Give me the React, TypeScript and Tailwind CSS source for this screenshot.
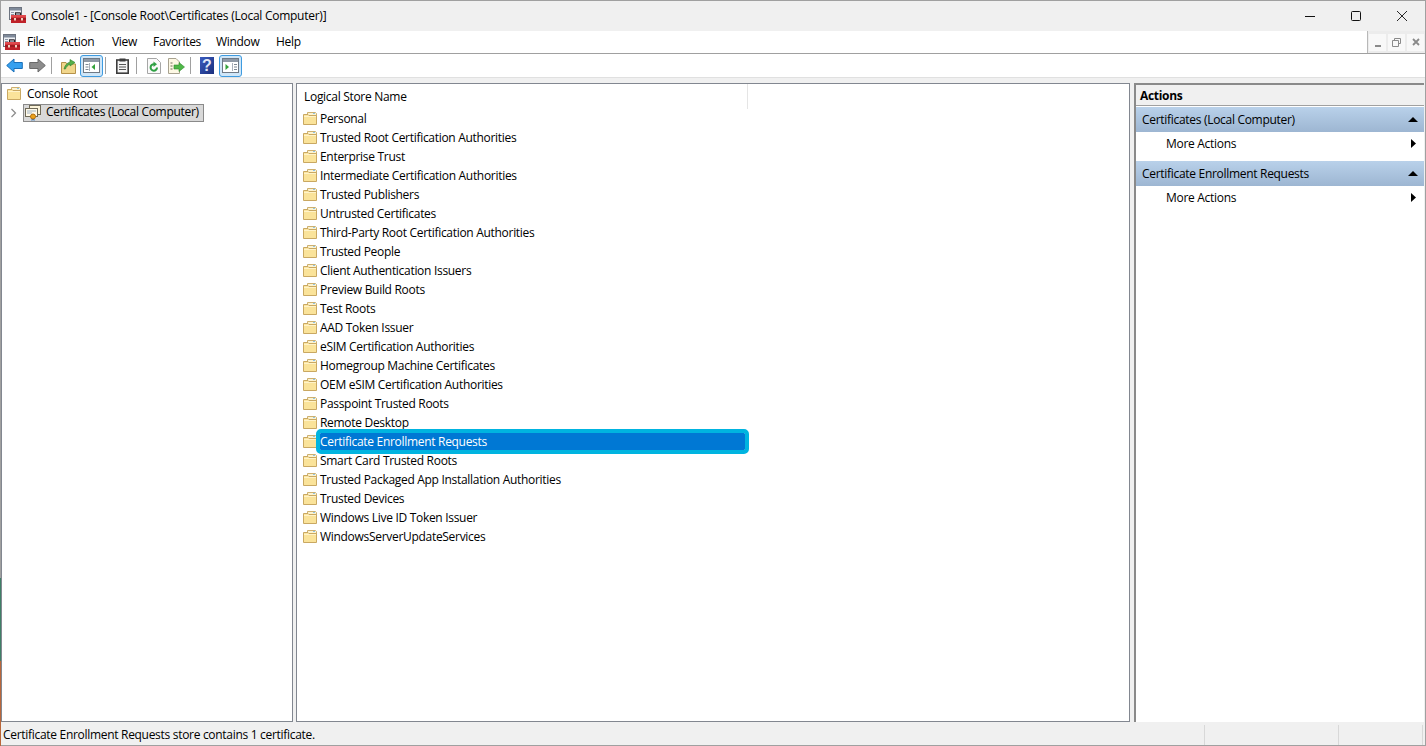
import { Fragment } from 'react';

const stores = [
  'Personal',
  'Trusted Root Certification Authorities',
  'Enterprise Trust',
  'Intermediate Certification Authorities',
  'Trusted Publishers',
  'Untrusted Certificates',
  'Third-Party Root Certification Authorities',
  'Trusted People',
  'Client Authentication Issuers',
  'Preview Build Roots',
  'Test Roots',
  'AAD Token Issuer',
  'eSIM Certification Authorities',
  'Homegroup Machine Certificates',
  'OEM eSIM Certification Authorities',
  'Passpoint Trusted Roots',
  'Remote Desktop',
  'Certificate Enrollment Requests',
  'Smart Card Trusted Roots',
  'Trusted Packaged App Installation Authorities',
  'Trusted Devices',
  'Windows Live ID Token Issuer',
  'WindowsServerUpdateServices',
];

const menus = [
  { label: 'File', width: 'w-[34px]' },
  { label: 'Action', width: 'w-[51px]' },
  { label: 'View', width: 'w-[41px]' },
  { label: 'Favorites', width: 'w-[63px]' },
  { label: 'Window', width: 'w-[60px]' },
  { label: 'Help', width: 'w-[30px]' },
];

const actionGroups = ['Certificates (Local Computer)', 'Certificate Enrollment Requests'];

function Folder() {
  return (
    <svg width="14" height="13" viewBox="0 0 14 13" className="shrink-0">
      <path d="M4.5 2V0.5H12.5L13.5 1.5V4H4.5Z" fill="#fdf3cf" stroke="#cdb070" />
      <rect x="10" y="1" width="2" height="1" fill="#8fc4e8" />
      <path d="M0.5 12.5V2.5H5L6 3.5H13.5V12.5Z" fill="#fbe5a0" stroke="#c9a862" />
      <rect x="1" y="4" width="12" height="8" fill="#fae39a" />
      <rect x="1" y="4" width="12" height="1" fill="#fff3c9" />
    </svg>
  );
}

function AppIcon({ className }: { className?: string }) {
  return (
    <svg width="17" height="16" viewBox="0 0 17 16" className={className}>
      <rect x="0.5" y="0.5" width="12" height="12" fill="#eef1f5" stroke="#6d7480" />
      <rect x="1" y="1" width="11" height="2.5" fill="#7f8a9a" />
      <path d="M2 5.5h3M2 7.5h3M2 9.5h2M6 5.5h5M6 7.5h5" stroke="#8c96a6" />
      <path d="M6.5 8V6h5v2" fill="none" stroke="#2d2020" strokeWidth="1.1" />
      <rect x="2" y="8" width="15" height="8" fill="#bf2229" />
      <rect x="2" y="8" width="15" height="2.5" fill="#e0494c" />
      <path d="M2 12h15" stroke="#7d1217" />
      <rect x="5" y="11" width="2" height="2.5" fill="#f2d0c0" />
      <rect x="12" y="11" width="2" height="2.5" fill="#f2d0c0" />
    </svg>
  );
}

function CertIcon() {
  return (
    <svg width="16" height="16" viewBox="0 0 16 16" className="shrink-0">
      <rect x="4.5" y="0.5" width="11" height="9" fill="#fbf3d9" stroke="#6f6a58" />
      <rect x="0.5" y="3.5" width="12" height="8" fill="#fff9e8" stroke="#6f6a58" />
      <path d="M2 6h9M2 8h5" stroke="#9fb4c8" />
      <path d="M6.5 13V16L8 15l1.5 1v-3" fill="#3f7fc4" />
      <circle cx="8" cy="11.5" r="2.5" fill="#eaa21c" stroke="#b56f10" />
    </svg>
  );
}

function ArrowIcon({ dir, fill, stroke }: { dir: 'left' | 'right'; fill: string; stroke: string }) {
  const d = dir === 'left' ? 'M0.7 7.5L8 1V4.5H16.3V10.5H8V14Z' : 'M16.3 7.5L9 1V4.5H0.7V10.5H9V14Z';
  return (
    <svg width="17" height="15" viewBox="0 0 17 15" className="block">
      <path d={d} fill={fill} stroke={stroke} strokeLinejoin="round" />
    </svg>
  );
}

function UpFolderIcon() {
  return (
    <svg width="15" height="16" viewBox="0 0 15 16" className="block">
      <path d="M0.5 15.5V4.5H5L6 6H14.5V15.5Z" fill="#f1d68c" stroke="#b6924a" />
      <path d="M3 11C4 7 6 5 9 4V1.5L14 4.5L9 8V6C7 7 5 9 4.5 11Z" fill="#55b04a" stroke="#2f7f2d" strokeWidth="0.6" />
    </svg>
  );
}

function PaneIcon({ side }: { side: 'left' | 'right' }) {
  return (
    <svg width="17" height="15" viewBox="0 0 17 15" className="block">
      <rect x="0.5" y="0.5" width="16" height="14" fill="#fff" stroke="#6f7985" />
      <rect x="1" y="1" width="15" height="3" fill="#8f99a6" />
      {side === 'left' ? (
        <>
          <path d="M2.5 6.5h3M2.5 9h3M2.5 11.5h3" stroke="#7d8894" />
          <path d="M6.5 5v8" stroke="#a8b0ba" />
          <path d="M12 6v6L8.5 9Z" fill="#35a23b" />
        </>
      ) : (
        <>
          <path d="M12 6.5h3M12 9h3M12 11.5h3" stroke="#7d8894" />
          <path d="M10.5 5v8" stroke="#a8b0ba" />
          <path d="M3.5 6v6L7 9Z" fill="#35a23b" />
        </>
      )}
    </svg>
  );
}

function ClipboardIcon() {
  return (
    <svg width="13" height="16" viewBox="0 0 13 16" className="block">
      <rect x="0.8" y="2" width="11.4" height="13.2" fill="#f5f5f5" stroke="#3c3c3c" strokeWidth="1.6" />
      <rect x="3.5" y="0.5" width="6" height="3" fill="#3c3c3c" />
      <path d="M3 6.5h7M3 9h7M3 11.5h7" stroke="#555" />
    </svg>
  );
}

function RefreshIcon() {
  return (
    <svg width="14" height="16" viewBox="0 0 14 16" className="block">
      <path d="M0.5 0.5H9.5L13.5 4.5V15.5H0.5Z" fill="#fafafa" stroke="#a6a6a6" />
      <path d="M10 9.5A3.2 3.2 0 1 1 7 6.3" fill="none" stroke="#2ea043" strokeWidth="2" />
      <path d="M6.5 3.5L10 6.3L6.5 9Z" fill="#2ea043" />
    </svg>
  );
}

function ExportIcon() {
  return (
    <svg width="17" height="16" viewBox="0 0 17 16" className="block">
      <path d="M0.5 0.5H8L11.5 4V15.5H0.5Z" fill="#fdf8e4" stroke="#a8a290" />
      <path d="M2.5 5h2M2.5 8h2M2.5 11h2" stroke="#6f6a58" />
      <path d="M6 7h5V4.5L16.5 9L11 13.5V11H6Z" fill="#4fb848" stroke="#2f8a2d" strokeWidth="0.6" />
    </svg>
  );
}

function HelpIcon() {
  return (
    <div className="flex h-[17px] w-[14px] items-center justify-center bg-gradient-to-br from-[#3a5cc0] to-[#1b2f7c] font-['Liberation_Sans',sans-serif] text-[16px] leading-none font-bold tracking-normal text-[#dfe6f8]">
      ?
    </div>
  );
}

function ToolbarSep({ className }: { className: string }) {
  return <div className={`h-[17px] w-px bg-[#a0a0a0] ${className}`} />;
}

function ToggledButton({ side, className }: { side: 'left' | 'right'; className: string }) {
  return (
    <div className={`flex h-[22px] w-[23px] items-center justify-center rounded-[3px] border border-[#3e9be0] bg-[#cfe6f8] ${className}`}>
      <PaneIcon side={side} />
    </div>
  );
}

export default function App() {
  return (
    <div className="relative flex h-[746px] w-[1426px] flex-col border-x border-t border-[#a0a0a0] bg-[#f0f0f0] font-['Open_Sans',sans-serif] text-[12px] tracking-[-0.3px] text-[#000]">
      {/* desktop peeking past the window edge */}
      <div className="absolute bottom-0 left-[-1px] flex h-[168px] w-px flex-col">
        <div className="h-[83px] bg-[#3f7f66]" />
        <div className="flex-1 bg-[#b9663a]" />
      </div>

      <div className="flex h-[30px] shrink-0 items-center bg-[#f0f0f0]">
        <AppIcon className="mb-[2px] ml-[8px] shrink-0" />
        <span className="ml-[5px] tracking-[-0.26px]">Console1 - [Console Root\Certificates (Local Computer)]</span>
        <div className="ml-auto flex h-full">
          <div className="flex w-[46px] items-center justify-center">
            <svg width="10" height="10" viewBox="0 0 10 10"><path d="M0 5.5h10" stroke="#111" /></svg>
          </div>
          <div className="flex w-[46px] items-center justify-center">
            <svg width="10" height="10" viewBox="0 0 10 10"><rect x="0.5" y="0.5" width="9" height="9" rx="1" fill="none" stroke="#111" /></svg>
          </div>
          <div className="flex w-[46px] items-center justify-center">
            <svg width="10" height="10" viewBox="0 0 10 10"><path d="M0 0L10 10M10 0L0 10" stroke="#111" strokeWidth="0.9" /></svg>
          </div>
        </div>
      </div>

      <div className="flex h-[23px] shrink-0 items-center border-b border-[#a0a0a0] bg-white">
        <AppIcon className="ml-[2px] shrink-0" />
        <div className="ml-[7px] flex">
          {menus.map((m) => (
            <span key={m.label} className={m.width}>
              {m.label}
            </span>
          ))}
        </div>
        <div className="ml-auto flex h-full w-[58px] items-center gap-[2px] border-l border-[#b8b8b8] bg-[#ececec] pl-[1px]">
          <div className="flex h-[17px] w-[17px] items-end justify-center bg-[#f8f8f8] pb-[4px]">
            <div className="h-[2px] w-[6px] bg-[#8a8a8a]" />
          </div>
          <div className="flex h-[17px] w-[17px] items-center justify-center bg-[#f8f8f8]">
            <svg width="9" height="9" viewBox="0 0 9 9"><path d="M2.5 2V0.5H8.5V5.5H7M0.5 2.5H6.5V8.5H0.5Z" fill="none" stroke="#8a8a8a" /></svg>
          </div>
          <div className="flex h-[17px] w-[17px] items-center justify-center bg-[#f8f8f8]">
            <svg width="8" height="8" viewBox="0 0 8 8"><path d="M1 1L7 7M7 1L1 7" stroke="#8a8a8a" strokeWidth="1.8" /></svg>
          </div>
        </div>
      </div>

      <div className="flex h-[23px] shrink-0 items-center bg-white">
        <div className="ml-[5px]">
          <ArrowIcon dir="left" fill="#35a0ef" stroke="#1a6fb8" />
        </div>
        <div className="ml-[6px]">
          <ArrowIcon dir="right" fill="#8c8c8c" stroke="#6a6a6a" />
        </div>
        <ToolbarSep className="ml-[5px]" />
        <div className="ml-[9px]">
          <UpFolderIcon />
        </div>
        <ToggledButton side="left" className="ml-[4px]" />
        <ToolbarSep className="ml-[2px]" />
        <div className="ml-[10px]">
          <ClipboardIcon />
        </div>
        <ToolbarSep className="ml-[7px]" />
        <div className="ml-[10px]">
          <RefreshIcon />
        </div>
        <div className="ml-[7px]">
          <ExportIcon />
        </div>
        <ToolbarSep className="ml-[5px]" />
        <div className="ml-[9px]">
          <HelpIcon />
        </div>
        <ToggledButton side="right" className="ml-[5px]" />
      </div>

      <div className="flex min-h-0 flex-1 border-t border-[#e0e0e0] pt-[5px]">
        <div className="h-full w-[292px] shrink-0 border border-[#828790] bg-white">
          <div className="flex h-[19px] items-center pl-[5px]">
            <Folder />
            <span className="ml-[6px]">Console Root</span>
          </div>
          <div className="flex h-[19px] items-center">
            <svg width="8" height="10" viewBox="0 0 8 10" className="ml-[8px] shrink-0">
              <path d="M1.5 1L5.5 5L1.5 9" fill="none" stroke="#8a8a8a" strokeWidth="1.2" />
            </svg>
            <div className="ml-[5px] flex h-[18px] w-[181px] items-center border border-[#8a8a8a] bg-[#d9d9d9] pl-[1px]">
              <CertIcon />
              <span className="ml-[5px] pb-px">Certificates (Local Computer)</span>
            </div>
          </div>
        </div>

        <div className="ml-[3px] h-full w-[834px] shrink-0 border border-[#828790] bg-white">
          <div className="flex h-[25px] w-[451px] items-center border-r border-[#e5e5e5] pt-[1px] pl-[7px]">Logical Store Name</div>
          {stores.map((name) => (
            <div key={name} className="flex h-[19px] items-center pl-[6px]">
              <Folder />
              <div
                className={
                  name === 'Certificate Enrollment Requests'
                    ? 'relative ml-[3px] h-[17px] w-[425px] rounded-[1px] bg-[#0078d4] leading-[17px] text-white outline-4 outline-[#00b4e0]'
                    : 'ml-[3px] h-[17px] w-[425px] leading-[17px]'
                }
              >
                {name}
              </div>
            </div>
          ))}
        </div>

        <div className="ml-[4px] h-full w-[290px] shrink-0 border-t-2 border-l-2 border-t-[#8a8a8a] border-l-[#8a8a8a] bg-white">
          <div className="flex h-[21px] items-center border-b border-[#a0a0a0] bg-[#f0f0f0] pt-[1px] pl-[4px] font-bold">Actions</div>
          {actionGroups.map((group) => (
            <Fragment key={group}>
              <div className="mt-px flex h-[25px] items-center justify-between bg-gradient-to-b from-[#b9d1ea] to-[#9db6d2] pr-[5px] pl-[6px]">
                <span>{group}</span>
                <svg width="10" height="5" viewBox="0 0 10 5" className="mr-[1px]"><path d="M5 0L10 5H0Z" fill="#000" /></svg>
              </div>
              <div className="flex h-[22px] items-center justify-between pt-[1px] pr-[8px] pl-[30px]">
                <span>More Actions</span>
                <svg width="5" height="9" viewBox="0 0 5 9"><path d="M0 0L5 4.5L0 9Z" fill="#000" /></svg>
              </div>
              <div className="h-[6px]" />
            </Fragment>
          ))}
        </div>
      </div>

      <div className="mt-px flex h-[23px] shrink-0 items-center border-t border-b border-t-[#f0f0f0] border-b-[#a0a0a0] bg-[#f0f0f0]">
        <span className="ml-[2px]">Certificate Enrollment Requests store contains 1 certificate.</span>
        <div className="ml-auto flex h-[20px]">
          <div className="w-[134px] border-l border-[#d8d8d8]" />
          <div className="w-[84px] border-l border-[#d8d8d8]" />
          <div className="w-[3px] border-l border-[#d8d8d8]" />
        </div>
      </div>
    </div>
  );
}
